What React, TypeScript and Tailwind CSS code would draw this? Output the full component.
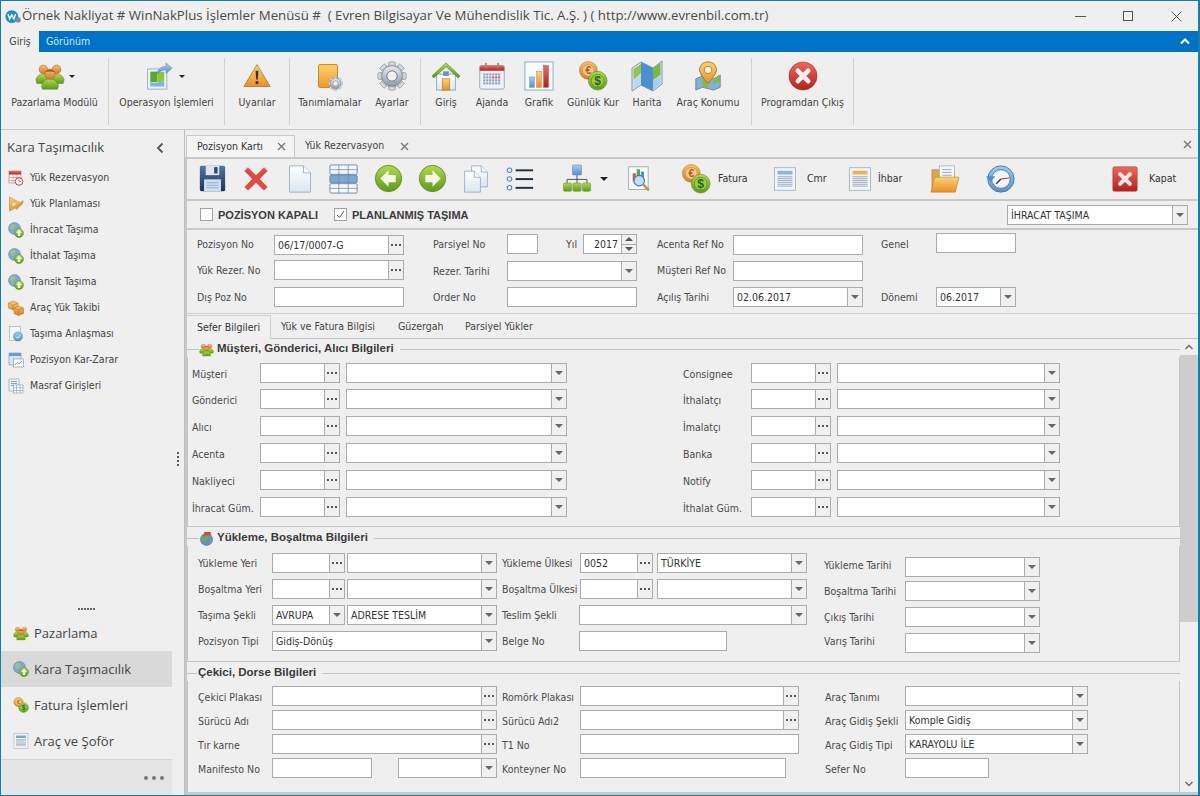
import type { ReactNode } from "react";
import { clsx } from "clsx";

function Svg({ className, children }: { className: string; children: ReactNode }) {
  return (
    <svg viewBox="0 0 32 32" className={clsx("block shrink-0", className)}>
      {children}
    </svg>
  );
}

function Defs() {
  const g = (id: string, a: string, b: string) => (
    <linearGradient id={id} x1="0" y1="0" x2="0" y2="1">
      <stop offset="0" stopColor={a} />
      <stop offset="1" stopColor={b} />
    </linearGradient>
  );
  return (
    <svg className="block h-0 w-0">
      <defs>
        {g("green", "#b4d84e", "#5c9a1c")}
        {g("orange", "#fcd273", "#e8902a")}
        {g("red", "#ea6a60", "#b3211d")}
        {g("blue", "#a9cdec", "#5a90c6")}
        {g("page", "#ffffff", "#dbe6f2")}
        {g("steel", "#e6ebf0", "#8f9aa6")}
        {g("navy", "#55749f", "#1e3557")}
        {g("euro", "#f8c070", "#d9792a")}
      </defs>
    </svg>
  );
}

const People = ({ className }: { className: string }) => (
  <Svg className={className}>
    <path d="M1 20c1-5 5-6 8-6s7 1 8 6l-1 4H2zM15 20c1-5 5-6 8-6s7 1 8 6l-1 4H16z" fill="url(#green)" stroke="#5d8a22" strokeWidth=".6" />
    <circle cx="9" cy="9" r="4.6" fill="url(#euro)" stroke="#a3622a" strokeWidth=".6" />
    <circle cx="23" cy="9" r="4.6" fill="url(#euro)" stroke="#a3622a" strokeWidth=".6" />
    <path d="M7 27c1-6 5-8 9-8s8 2 9 8l-1 3H8z" fill="url(#green)" stroke="#5d8a22" strokeWidth=".6" />
    <circle cx="16" cy="14" r="5.4" fill="url(#euro)" stroke="#a3622a" strokeWidth=".6" />
    <path d="M11 12c2-4 8-4 10 0-3-1-7-1-10 0z" fill="#9c5a2a" />
  </Svg>
);

const MapDoc = ({ className }: { className: string }) => (
  <Svg className={className}>
    <rect x="3" y="8" width="22" height="23" fill="#eef3f9" stroke="#8ea6c2" />
    <path d="M6 11h8v12H6z" fill="#5da632" />
    <path d="M14 11h8v10l-8 3z" fill="#8cc63f" />
    <path d="M6 23l8 1 8-3v7H6z" fill="#7fb5dd" />
    <path d="M14 14c0-6 5-9 10-9V1l7 6-7 6V9c-4 0-7 1-10 5z" fill="url(#blue)" stroke="#5a88b5" strokeWidth=".6" />
  </Svg>
);

const Warning = ({ className }: { className: string }) => (
  <Svg className={className}>
    <path d="M16 3L31 28H1z" fill="url(#orange)" stroke="#b97a2c" strokeLinejoin="round" />
    <path d="M14.4 10h3.2l-.7 10h-1.8z" fill="#333" />
    <circle cx="16" cy="23.5" r="1.8" fill="#333" />
  </Svg>
);

function Gear({ className, id = "steel" }: { className: string; id?: string }) {
  return (
    <Svg className={className}>
      {[0, 45, 90, 135, 180, 225, 270, 315].map((a) => (
        <rect key={a} x="12.5" y="1" width="7" height="8" rx="1.2" fill={`url(#${id})`} stroke="#6f7a86" strokeWidth=".7" transform={`rotate(${a} 16 16)`} />
      ))}
      <circle cx="16" cy="16" r="11" fill={`url(#${id})`} stroke="#6f7a86" strokeWidth=".7" />
      <circle cx="16" cy="16" r="5.5" fill="#f0f0f0" stroke="#6f7a86" strokeWidth="1" />
    </Svg>
  );
}

const FolderGear = ({ className }: { className: string }) => (
  <div className={clsx("flex shrink-0 items-end justify-end rounded-[2px] border border-[#c98a2a] bg-gradient-to-b from-[#fcd06c] to-[#ec9a30]", className)}>
    <Gear className="-mr-[6px] -mb-[4px] h-[15px] w-[15px]" />
  </div>
);

const House = ({ className }: { className: string }) => (
  <Svg className={className}>
    <rect x="6" y="14" width="20" height="17" fill="url(#page)" stroke="#8ea6c2" />
    <path d="M1 16L16 2l15 14-2 2L16 6 3 18z" fill="url(#green)" stroke="#5a8a2a" strokeWidth=".7" />
    <rect x="13" y="11" width="6" height="5" fill="#6c93bd" />
    <rect x="12" y="19" width="8" height="12" fill="url(#orange)" stroke="#b97a2c" strokeWidth=".7" />
  </Svg>
);

function Calendar({ className }: { className: string }) {
  const cells = [];
  for (let y = 0; y < 4; y++) for (let x = 0; x < 6; x++) cells.push(<rect key={x + "-" + y} x={6 + x * 3.4} y={13 + y * 3.4} width="2.4" height="2.4" fill={y === 1 && x > 2 ? "#c86060" : "#8c9cc0"} />);
  return (
    <Svg className={className}>
      <rect x="2" y="4" width="28" height="27" rx="2" fill="#f1f2f6" stroke="#93a0b0" />
      <path d="M2 6a2 2 0 012-2h24a2 2 0 012 2v4H2z" fill="url(#red)" />
      <rect x="8" y="1" width="2" height="6" fill="#8a8a8a" />
      <rect x="22" y="1" width="2" height="6" fill="#8a8a8a" />
      {cells}
    </Svg>
  );
}

const Chart = ({ className }: { className: string }) => (
  <Svg className={className}>
    <rect x="1" y="1" width="30" height="30" fill="#f8fafc" stroke="#8ea6c2" />
    <rect x="6" y="17" width="5" height="11" fill="url(#blue)" stroke="#5a88b5" strokeWidth=".5" />
    <rect x="13.5" y="11" width="5" height="17" fill="url(#orange)" stroke="#b97a2c" strokeWidth=".5" />
    <rect x="21" y="5" width="5" height="23" fill="url(#red)" stroke="#a33" strokeWidth=".5" />
  </Svg>
);

const Coins = ({ className }: { className: string }) => (
  <Svg className={className}>
    <circle cx="11" cy="10" r="9.5" fill="url(#euro)" stroke="#b5762a" strokeWidth=".6" />
    <circle cx="11" cy="10" r="6.3" fill="#f6c987" stroke="#c8863c" strokeWidth=".6" />
    <text x="11" y="14" textAnchor="middle" fontSize="11" fontWeight="700" fill="#b8561c" fontFamily="Liberation Sans">€</text>
    <circle cx="21" cy="21" r="10" fill="url(#green)" stroke="#4f8a1a" strokeWidth=".6" />
    <circle cx="21" cy="21" r="6.8" fill="#9ccc44" stroke="#4f8a1a" strokeWidth=".7" />
    <text x="21" y="25.5" textAnchor="middle" fontSize="13" fontWeight="700" fill="#2a661a" fontFamily="Liberation Sans">$</text>
  </Svg>
);

const MapFold = ({ className }: { className: string }) => (
  <Svg className={className}>
    <path d="M1 8l9-6 12 6 9-7v23l-9 7-12-6-9 6z" fill="#dfe8f0" stroke="#8293a5" />
    <path d="M10 2l12 6v23l-12-6z" fill="#4f8fd0" />
    <path d="M2.5 9L10 4v9l-7.500 7z" fill="#8cc54a" />
    <path d="M22 8l7.500-5v12L22 20z" fill="#7ab948" />
    <path d="M2.500 20L10 14v10l-7.500 5z" fill="#b9d8ee" />
    <path d="M22 20l7.500-4v8L22 30z" fill="#a9cfe8" />
  </Svg>
);

const PinMap = ({ className }: { className: string }) => (
  <Svg className={className}>
    <path d="M3 19l7-3 12 3 7-4v13l-7 3-12-3-7 3z" fill="#7fb2d8" stroke="#75838f" />
    <path d="M10 16l6 2v11l-6-2zM22 19l7-4v6l-7 4z" fill="#82b94a" />
    <path d="M16 1c-5.500 0-9 3.800-9 8.500C7 14.500 16 24 16 24s9-9.500 9-14.500C25 4.800 21.500 1 16 1z" fill="url(#orange)" stroke="#a8742a" />
    <circle cx="16" cy="9.500" r="4" fill="#fdf3d8" stroke="#b98030" />
  </Svg>
);

const RedCircle = ({ className }: { className: string }) => (
  <Svg className={className}>
    <circle cx="16" cy="16" r="15" fill="url(#red)" stroke="#a52a25" strokeWidth=".6" />
    <path d="M10.500 10.500L21.500 21.500M21.500 10.500L10.500 21.500" stroke="#fff" strokeWidth="5" strokeLinecap="round" opacity=".92" />
  </Svg>
);

const Save = ({ className }: { className: string }) => (
  <Svg className={className}>
    <rect x="1" y="1" width="30" height="30" rx="2" fill="url(#navy)" />
    <rect x="8" y="1" width="16" height="11" fill="#dfe5ee" />
    <rect x="18" y="2.500" width="4" height="7.500" fill="#2d476e" />
    <rect x="6" y="17" width="20" height="14" fill="#cfe0f1" />
    <path d="M9 21h14M9 24h14M9 27h14" stroke="#86a6c8" />
  </Svg>
);

const CrossIcon = ({ className }: { className: string }) => (
  <Svg className={className}>
    <path d="M4 4L28 28M28 4L4 28" stroke="#dc4c42" strokeWidth="6.500" />
    <path d="M3 3l3-1M26 2l3 1" stroke="#efa9a0" strokeWidth="1" />
  </Svg>
);

const Page = ({ className }: { className: string }) => (
  <Svg className={className}>
    <path d="M4 1h16l8 8v22H4z" fill="url(#page)" stroke="#92abc6" />
    <path d="M20 1v8h8" fill="#fff" stroke="#92abc6" />
  </Svg>
);

const Pages = ({ className }: { className: string }) => (
  <Svg className={className}>
    <path d="M11 1h11l7 7v17H11z" fill="url(#page)" stroke="#92abc6" />
    <path d="M22 1v7h7" fill="#fff" stroke="#92abc6" />
    <path d="M3 7h11l7 7v17H3z" fill="url(#page)" stroke="#92abc6" />
    <path d="M14 7v7h7" fill="#fff" stroke="#92abc6" />
  </Svg>
);

const GridIcon = ({ className }: { className: string }) => (
  <Svg className={className}>
    <rect x="1" y="1" width="29" height="10" rx="1" fill="#f5f8fb" stroke="#6c88a8" />
    <rect x="1" y="12" width="29" height="8" rx="1" fill="#7ea6d2" stroke="#6c88a8" />
    <rect x="1" y="21" width="29" height="10" rx="1" fill="#f5f8fb" stroke="#6c88a8" />
    <path d="M1 6h29M1 26h29M10.500 1v30M20.500 1v30" stroke="#6c88a8" strokeWidth=".8" />
  </Svg>
);

const Arrow = ({ className, right }: { className: string; right?: boolean }) => (
  <Svg className={className}>
    <circle cx="16" cy="16" r="14.500" fill="url(#green)" stroke="#5b8f25" />
    <path d={right ? "M8 12h8V7l9 9-9 9v-5H8z" : "M24 12h-8V7l-9 9 9 9v-5h8z"} fill="#f2f7e6" />
  </Svg>
);

const ListIcon = ({ className }: { className: string }) => (
  <Svg className={className}>
    {[6, 16, 26].map((y) => (
      <g key={y}>
        <circle cx="4" cy={y} r="2.600" fill="#eaf2fa" stroke="#4f86c0" strokeWidth="1.200" />
        <rect x="11" y={y - 1} width="20" height="2.200" fill="#1f2d3d" />
      </g>
    ))}
  </Svg>
);

const Org = ({ className }: { className: string }) => (
  <Svg className={className}>
    <rect x="11" y="1" width="10" height="11" rx="1" fill="url(#blue)" stroke="#5a88b5" strokeWidth=".6" />
    <path d="M16 12v5M5 21v-4h22v4M16 17v4" stroke="#445" fill="none" />
    <rect x="1" y="21" width="9" height="9" rx="1.500" fill="url(#green)" stroke="#5b8f25" strokeWidth=".6" />
    <rect x="11.500" y="21" width="9" height="9" rx="1.500" fill="url(#green)" stroke="#5b8f25" strokeWidth=".6" />
    <rect x="22" y="21" width="9" height="9" rx="1.500" fill="url(#green)" stroke="#5b8f25" strokeWidth=".6" />
  </Svg>
);

const Report = ({ className }: { className: string }) => (
  <Svg className={className}>
    <rect x="2" y="1" width="24" height="28" fill="#f8fafc" stroke="#8ea0b8" />
    <rect x="7" y="9" width="4" height="10" fill="#d35a50" />
    <rect x="12" y="4" width="4" height="10" fill="#5aa544" />
    <rect x="17" y="7" width="4" height="9" fill="#5d8ec6" />
    <circle cx="15" cy="18" r="6.500" fill="#bddcee" fillOpacity=".9" stroke="#4f7aa5" strokeWidth="1.500" />
    <path d="M20 23l7 7" stroke="#cf8a3a" strokeWidth="3" />
  </Svg>
);

const LinesDoc = ({ className, head }: { className: string; head: string }) => (
  <Svg className={className}>
    <rect x="2" y="1" width="28" height="30" fill="#f2f6fb" stroke="#8ea6c2" />
    <rect x="6" y="5" width="20" height="5" fill={head} />
    <path d="M6 13h20M6 15.500h20M6 18h20M6 20.500h20M6 23h20M6 25.500h20" stroke="#7e93ab" />
  </Svg>
);

const Folder = ({ className }: { className: string }) => (
  <Svg className={className}>
    <path d="M2 6h10l2 3h12v20H2z" fill="#e1a448" stroke="#b47d2c" strokeWidth=".6" />
    <rect x="10" y="2" width="16" height="18" fill="#f5f7fa" stroke="#98a5b5" strokeWidth=".7" />
    <path d="M13 6h10M13 9h10M13 12h10" stroke="#98a5b5" />
    <path d="M5 14h26l-4 16H1z" fill="url(#orange)" stroke="#b47d2c" strokeWidth=".6" />
  </Svg>
);

const ClockBack = ({ className }: { className: string }) => (
  <Svg className={className}>
    <circle cx="17" cy="16" r="14" fill="url(#blue)" stroke="#3f7ab0" />
    <circle cx="17" cy="16" r="10" fill="#f2f6fb" stroke="#3f7ab0" />
    <path d="M1 13h10l-5 6z" fill="#4f8ec8" />
    <path d="M17 16l9-1" stroke="#b33" strokeWidth="1.200" />
    <path d="M17 16l-5 5" stroke="#334" strokeWidth="1.500" />
  </Svg>
);

const KapatIcon = ({ className }: { className: string }) => (
  <Svg className={className}>
    <rect x="1" y="1" width="30" height="30" rx="2" fill="url(#red)" stroke="#9f2a25" strokeWidth=".6" />
    <path d="M10 10L22 22M22 10L10 22" stroke="#fbe6e2" strokeWidth="5" strokeLinecap="round" />
  </Svg>
);

const GlobeUp = ({ className }: { className: string }) => (
  <Svg className={className}>
    <circle cx="13" cy="13" r="12" fill="#7ea8d4" stroke="#5c7fa5" />
    <path d="M5 6c4-3 9-2 10 1s-3 4-4 7-4 2-6-1-1-5 0-7zM17 15c3-1 6 0 6 2s-3 4-5 3-3-4-1-5z" fill="#9fc08a" />
    <circle cx="22" cy="22" r="9" fill="url(#green)" stroke="#4f8a1a" />
    <path d="M22 15l6 7h-3.500v6h-5v-6H16z" fill="#f2f9e6" />
  </Svg>
);

const CalClock = ({ className }: { className: string }) => (
  <Svg className={className}>
    <rect x="2" y="2" width="24" height="24" fill="#f7f7f7" stroke="#a06060" />
    <rect x="2" y="2" width="24" height="7" fill="url(#red)" />
    <path d="M2 15h24M2 21h24M10 9v17M18 9v17" stroke="#b07070" />
    <circle cx="22" cy="23" r="7.500" fill="#fff" stroke="#c0392b" strokeWidth="2" />
    <path d="M22 19v4h3" stroke="#c0392b" strokeWidth="1.500" fill="none" />
  </Svg>
);

const PlanIcon = ({ className }: { className: string }) => (
  <Svg className={className}>
    <path d="M3 2l26 14L3 30z" fill="url(#orange)" stroke="#b47d2c" />
    <path d="M8 11l10 5-10 6z" fill="#fdeec8" stroke="#b47d2c" strokeWidth=".7" />
    <path d="M15 25L29 9l2 3-13 15z" fill="#e8a040" stroke="#a0682a" strokeWidth=".7" />
  </Svg>
);

const Boxes = ({ className }: { className: string }) => (
  <Svg className={className}>
    <path d="M10 2l10 4v10l-10 4L1 16V6z" fill="url(#orange)" stroke="#a8742a" />
    <path d="M21 12l10 4v11l-10 4-9-4V16z" fill="url(#euro)" stroke="#a8742a" />
    <path d="M1 6l9 4 10-4M10 10v10M12 16l9 4 10-4M21 20v11" stroke="#a8742a" fill="none" />
  </Svg>
);

const Agreement = ({ className }: { className: string }) => (
  <Svg className={className}>
    <rect x="3" y="1" width="22" height="28" fill="#f5f8fb" stroke="#7e9bb8" />
    <circle cx="20" cy="21" r="9" fill="url(#blue)" stroke="#4f7aa5" />
    <path d="M15.500 21l3.500 3.500 5.500-6" stroke="#fff" strokeWidth="2" fill="none" />
  </Svg>
);

const WinChart = ({ className }: { className: string }) => (
  <Svg className={className}>
    <rect x="2" y="2" width="24" height="24" fill="#d7e5f3" stroke="#5d83ab" />
    <rect x="2" y="2" width="24" height="6" fill="#6d9ac8" />
    <rect x="11" y="14" width="20" height="16" fill="#fff" stroke="#5d83ab" />
    <path d="M14 26l4-5 4 3 6-6" stroke="#3d8a3d" strokeWidth="1.500" fill="none" />
  </Svg>
);

const TableCalc = ({ className }: { className: string }) => (
  <Svg className={className}>
    <rect x="2" y="2" width="20" height="24" fill="#eef3f9" stroke="#6b88a6" />
    <path d="M6 7h12M6 11h12M6 15h5" stroke="#6b88a6" strokeWidth="1.500" />
    <rect x="11" y="14" width="19" height="16" fill="#fff" stroke="#6b88a6" />
    <path d="M11 19.500h19M11 25h19M17 14v16M24 14v16" stroke="#6b88a6" />
  </Svg>
);

const FlagGlobe = ({ className }: { className: string }) => (
  <Svg className={className}>
    <circle cx="16" cy="18" r="13" fill="#5f8fc4" stroke="#4a6a8a" />
    <path d="M6 12c5-4 12-4 14 0s-4 5-6 9-6 3-8-1-2-6 0-8zM22 20c3-1 5 0 5 2s-3 4-5 3-2-4 0-5z" fill="#74a85a" />
    <path d="M12 2v12" stroke="#666" strokeWidth="1.500" />
    <path d="M12 2h13v7H12z" fill="#d8453a" />
  </Svg>
);

function Caret({ className = "border-t-[#666]" }: { className?: string }) {
  return <span className={clsx("block h-0 w-0 border-x-[4px] border-t-[4px] border-x-transparent", className)} />;
}

function SmallCaret({ className }: { className: string }) {
  return <span className={clsx("block h-0 w-0 border-x-[3px] border-t-[3px] border-x-transparent border-t-[#222]", className)} />;
}

function Dots() {
  return (
    <span className="flex gap-[2px]">
      <i className="block h-[2px] w-[2px] bg-[#555]" />
      <i className="block h-[2px] w-[2px] bg-[#555]" />
      <i className="block h-[2px] w-[2px] bg-[#555]" />
    </span>
  );
}

function Field({ className, value, kind }: { className: string; value?: string; kind?: "dots" | "drop" }) {
  return (
    <div className={clsx("flex h-5 shrink-0 border border-[#ababab] bg-white", className)}>
      <span className="min-w-0 flex-1 px-[3px] leading-[18px] whitespace-nowrap text-[#333]">{value}</span>
      {kind && (
        <span className="flex w-[15px] shrink-0 items-center justify-center border-l border-[#ababab] bg-[#f0f0f0]">
          {kind === "dots" ? <Dots /> : <Caret />}
        </span>
      )}
    </div>
  );
}

function Label({ className, children }: { className: string; children: ReactNode }) {
  return <span className={clsx("shrink-0 leading-5 whitespace-nowrap text-[#4a4a4a]", className)}>{children}</span>;
}

// a few rows sit their captions one pixel under the field's middle
function LowLabel({ className, children }: { className: string; children: ReactNode }) {
  return <Label className={clsx("translate-y-px", className)}>{children}</Label>;
}

function RibbonItem({ className, icon, label, arrow }: { className: string; icon: ReactNode; label: string; arrow?: string }) {
  return (
    <div className={clsx("flex shrink-0 flex-col items-center", className)}>
      <div className="flex h-9 items-center">
        {icon}
        {arrow && <SmallCaret className={arrow} />}
      </div>
      <span className="leading-4 whitespace-nowrap text-[#444]">{label}</span>
    </div>
  );
}

function RibbonGroup({ className, children }: { className: string; children: ReactNode }) {
  return <div className={clsx("flex h-[67px] shrink-0 items-start border-r border-[#d0d0d0]", className)}>{children}</div>;
}

function Ribbon() {
  return (
    <div className="flex h-[78px] shrink-0 border-b border-[#c6c6c6] pt-[6px]">
      <RibbonGroup className="w-[108px]">
        <RibbonItem className="w-[107px]" label="Pazarlama Modülü" arrow="ml-[3px] -mr-[9px]" icon={<People className="ml-[-10px] h-[30px] w-[32px]" />} />
      </RibbonGroup>
      <RibbonGroup className="w-[116px]">
        <RibbonItem className="w-[115px]" label="Operasyon İşlemleri" arrow="ml-[6px] -mr-[12px]" icon={<MapDoc className="ml-[-16px] h-[30px] w-[28px]" />} />
      </RibbonGroup>
      <RibbonGroup className="w-[65px]">
        <RibbonItem className="w-[64px]" label="Uyarılar" icon={<Warning className="h-[28px] w-[30px]" />} />
      </RibbonGroup>
      <RibbonGroup className="w-[131px]">
        <RibbonItem className="w-[80px]" label="Tanımlamalar" icon={<FolderGear className="h-[24px] w-[20px] -translate-x-[2px]" />} />
        <RibbonItem className="w-[44px]" label="Ayarlar" icon={<Gear className="h-[30px] w-[30px]" />} />
      </RibbonGroup>
      <RibbonGroup className="w-[331px]">
        <RibbonItem className="w-[50px]" label="Giriş" icon={<House className="h-[30px] w-[30px]" />} />
        <RibbonItem className="w-[42px]" label="Ajanda" icon={<Calendar className="h-[30px] w-[28px]" />} />
        <RibbonItem className="w-[52px]" label="Grafik" icon={<Chart className="h-[30px] w-[30px]" />} />
        <RibbonItem className="w-[56px]" label="Günlük Kur" icon={<Coins className="h-[30px] w-[30px]" />} />
        <RibbonItem className="w-[52px]" label="Harita" icon={<MapFold className="h-[32px] w-[32px]" />} />
        <RibbonItem className="w-[70px]" label="Araç Konumu" icon={<PinMap className="h-[32px] w-[30px]" />} />
      </RibbonGroup>
      <RibbonGroup className="w-[102px]">
        <RibbonItem className="w-[101px]" label="Programdan Çıkış" icon={<RedCircle className="h-[30px] w-[30px]" />} />
      </RibbonGroup>
    </div>
  );
}

const moduleItems = [
  { label: "Yük Rezervasyon", icon: <CalClock className="h-4 w-4" /> },
  { label: "Yük Planlaması", icon: <PlanIcon className="h-4 w-4" /> },
  { label: "İhracat Taşıma", icon: <GlobeUp className="h-4 w-4" /> },
  { label: "İthalat Taşıma", icon: <GlobeUp className="h-4 w-4" /> },
  { label: "Transit Taşıma", icon: <GlobeUp className="h-4 w-4" /> },
  { label: "Araç Yük Takibi", icon: <Boxes className="h-4 w-4" /> },
  { label: "Taşıma Anlaşması", icon: <Agreement className="h-4 w-4" /> },
  { label: "Pozisyon Kar-Zarar", icon: <WinChart className="h-4 w-4" /> },
  { label: "Masraf Girişleri", icon: <TableCalc className="h-4 w-4" /> },
];

const navItems = [
  { label: "Pazarlama", icon: <People className="h-4 w-4" /> },
  { label: "Kara Taşımacılık", icon: <GlobeUp className="h-4 w-4" />, active: true },
  { label: "Fatura İşlemleri", icon: <Coins className="h-4 w-4" /> },
  { label: "Araç ve Şoför", icon: <LinesDoc className="h-4 w-4" head="#7fa6d3" /> },
];

const headingFont = "text-[13px] [font-family:'Open_Sans',sans-serif]";

function Sidebar() {
  return (
    <aside className="flex w-[184px] shrink-0 border-r border-[#bdbdbd]">
      <div className="flex w-[171px] shrink-0 flex-col">
        <div className="flex h-[35px] shrink-0 items-center justify-between pr-[7px] pl-[6px]">
          <span className={clsx(headingFont, "text-[#444]")}>Kara Taşımacılık</span>
          <svg viewBox="0 0 10 12" className="h-3 w-[10px]">
            <path d="M7.500 1.500L3 6l4.500 4.500" stroke="#555" strokeWidth="1.800" fill="none" />
          </svg>
        </div>
        <div className="flex flex-col">
          {moduleItems.map((m) => (
            <div key={m.label} className="flex h-[26px] items-center gap-[6px] pl-[7px]">
              {m.icon}
              <span className="text-[#444]">{m.label}</span>
            </div>
          ))}
        </div>
        <div className="mt-auto flex h-[12px] items-center justify-center gap-[1px]">
          {[0, 1, 2, 3, 4, 5].map((d) => (
            <i key={d} className="block h-[2px] w-[2px] bg-[#666]" />
          ))}
        </div>
        <div className="flex flex-col">
          {navItems.map((n) => (
            <div key={n.label} className={clsx("flex h-9 items-center gap-[5px] pl-[12px] text-[#444]", headingFont, n.active && "bg-[#d9d9d9]")}>
              {n.icon}
              <span className="translate-y-px">{n.label}</span>
            </div>
          ))}
        </div>
        <div className="flex h-[36px] items-center justify-end gap-[4px] border-t border-[#d4d4d4] bg-[#e5e5e5] pr-[8px]">
          <i className="block h-[4px] w-[4px] rounded-full bg-[#777]" />
          <i className="block h-[4px] w-[4px] rounded-full bg-[#777]" />
          <i className="block h-[4px] w-[4px] rounded-full bg-[#777]" />
        </div>
      </div>
      <div className="flex flex-1 flex-col items-center justify-center gap-[2px] pb-[8px]">
        <i className="block h-[2px] w-[2px] bg-[#555]" />
        <i className="block h-[2px] w-[2px] bg-[#555]" />
        <i className="block h-[2px] w-[2px] bg-[#555]" />
        <i className="block h-[2px] w-[2px] bg-[#555]" />
      </div>
    </aside>
  );
}

function Toolbar() {
  return (
    <div className="flex h-[44px] shrink-0 items-center border-y-2 border-l-2 border-[#c8c8c8] pb-[1px] pl-[3px]">
      <span className="flex w-[44px] justify-center"><Save className="h-[27px] w-[27px]" /></span>
      <span className="flex w-[44px] justify-center"><CrossIcon className="h-[26px] w-[26px]" /></span>
      <span className="flex w-[44px] justify-center"><Page className="h-[30px] w-[28px]" /></span>
      <span className="flex w-[44px] justify-center"><GridIcon className="h-[30px] w-[30px]" /></span>
      <span className="flex w-[44px] justify-center"><Arrow className="h-[29px] w-[29px]" /></span>
      <span className="flex w-[44px] justify-center"><Arrow right className="h-[29px] w-[29px]" /></span>
      <span className="flex w-[44px] justify-center"><Pages className="h-[30px] w-[28px]" /></span>
      <span className="flex w-[44px] justify-center"><ListIcon className="h-[28px] w-[28px]" /></span>
      <Org className="ml-[20px] h-[29px] w-[30px]" />
      <Caret className="ml-[8px] mr-[0px] border-t-[#222]" />
      <Report className="ml-[19px] h-[30px] w-[26px]" />
      <Coins className="ml-[28px] h-[30px] w-[30px]" />
      <span className="ml-[7px] w-[32px] text-[#333]">Fatura</span>
      <LinesDoc className="ml-[23px] h-[30px] w-[24px]" head="#8fb5dd" />
      <span className="ml-[10px] w-[20px] text-[#333]">Cmr</span>
      <LinesDoc className="ml-[21px] h-[30px] w-[24px]" head="#f0b04a" />
      <span className="ml-[6px] w-[26px] text-[#333]">İhbar</span>
      <Folder className="ml-[25px] h-[30px] w-[32px]" />
      <ClockBack className="ml-[24px] h-[30px] w-[30px]" />
      <KapatIcon className="ml-[97px] h-[26px] w-[26px]" />
      <span className="ml-[11px] text-[#333]">Kapat</span>
    </div>
  );
}

const boldText = "font-bold whitespace-nowrap text-[#3c3c3c] [font-family:'Liberation_Sans',sans-serif]";

function CheckRow() {
  return (
    <div className="flex h-[29px] shrink-0 items-center border-b-2 border-l-2 border-[#c8c8c8] pl-[13px]">
      <span className="h-[13px] w-[13px] border border-[#a0a0a0] bg-white" />
      <span className={clsx("mt-px ml-[5px] w-[116px] text-[11px]", boldText)}>POZİSYON KAPALI</span>
      <span className="flex h-[13px] w-[13px] items-center justify-center border border-[#a0a0a0] bg-white">
        <svg viewBox="0 0 11 11" className="h-[11px] w-[11px]">
          <path d="M2 6l2.500 2.500L9 2" stroke="#555" strokeWidth="1" fill="none" />
        </svg>
      </span>
      <span className={clsx("mt-px ml-[5px] text-[11px]", boldText)}>PLANLANMIŞ TAŞIMA</span>
      <Field className="mr-[10px] ml-auto w-[181px]" value="İHRACAT TAŞIMA" kind="drop" />
    </div>
  );
}

function Spin() {
  return (
    <div className="flex h-5 w-[54px] shrink-0 border border-[#ababab] bg-white">
      <span className="flex-1 pr-[3px] text-right leading-[18px] text-[#333]">2017</span>
      <span className="flex w-[15px] flex-col border-l border-[#ababab] bg-[#f0f0f0]">
        <span className="flex flex-1 items-center justify-center border-b border-[#ababab]">
          <Caret className="rotate-180 border-t-[#555]" />
        </span>
        <span className="flex flex-1 items-center justify-center">
          <Caret className="border-t-[#555]" />
        </span>
      </span>
    </div>
  );
}

function TopFields() {
  return (
    <div className="flex h-[84px] shrink-0 flex-col border-b border-l-2 border-[#c8c8c8] border-b-[#d0d0d0] pt-[4px] pl-[10px]">
      <div className="flex h-[27px] items-start">
        <Label className="w-[77px]">Pozisyon No</Label>
        <Field className="mt-[1px] w-[130px]" value="06/17/0007-G" kind="dots" />
        <Label className="ml-[29px] w-[74px]">Parsiyel No</Label>
        <Field className="w-[31px]" />
        <Label className="ml-[28px] w-[17px]">Yıl</Label>
        <Spin />
        <Label className="ml-[20px] w-[76px]">Acenta Ref No</Label>
        <Field className="mt-[1px] w-[130px]" />
        <Label className="ml-[18px] w-[55px]">Genel</Label>
        <Field className="-mt-[1px] w-[80px]" />
      </div>
      <div className="flex h-[27px] items-start">
        <Label className="w-[77px]">Yük Rezer. No</Label>
        <Field className="w-[130px]" kind="dots" />
        <Label className="ml-[29px] mt-[1px] w-[74px]">Rezer. Tarihi</Label>
        <Field className="mt-[1px] w-[130px]" kind="drop" />
        <Label className="ml-[20px] w-[76px]">Müşteri Ref No</Label>
        <Field className="mt-[1px] w-[130px]" />
      </div>
      <div className="flex h-[27px] items-start">
        <Label className="w-[77px]">Dış Poz No</Label>
        <Field className="w-[130px]" />
        <Label className="ml-[29px] w-[74px]">Order No</Label>
        <Field className="w-[130px]" />
        <Label className="ml-[20px] w-[76px]">Açılış Tarihi</Label>
        <Field className="w-[130px]" value="02.06.2017" kind="drop" />
        <Label className="ml-[18px] w-[55px]">Dönemi</Label>
        <Field className="w-[80px]" value="06.2017" kind="drop" />
      </div>
    </div>
  );
}

function InnerTabs() {
  return (
    <div className="flex h-[25px] shrink-0 items-end border-b border-l-2 border-[#c8c8c8] border-b-[#c4c4c4]">
      <span className="-mb-px flex h-[24px] w-[84px] items-center justify-center border-t border-r border-[#d0d0d0] bg-[#f0f0f0] text-[#333]">Sefer Bilgileri</span>
      <span className="ml-[10px] flex h-[23px] w-[117px] items-center text-[#444]">Yük ve Fatura Bilgisi</span>
      <span className="flex h-[23px] w-[67px] items-center text-[#444]">Güzergah</span>
      <span className="flex h-[23px] items-center text-[#444]">Parsiyel Yükler</span>
    </div>
  );
}

function Group({ title, icon, className, bodyClass, children }: { title: string; icon?: ReactNode; className?: string; bodyClass: string; children: ReactNode }) {
  return (
    <section className={clsx("flex shrink-0 flex-col", className)}>
      <div className="flex h-[15px] items-center">
        <i className={clsx("block h-px bg-[#c4c4c4]", icon ? "w-[12px]" : "w-[10px]")} />
        {icon}
        <span className={clsx("mb-[2px] px-[1px] text-[11.500px] leading-none font-bold whitespace-nowrap text-[#3a3a3a] [font-family:'Liberation_Sans',sans-serif]", icon && "ml-[2px]")}>{title}</span>
        <i className="ml-[5px] block h-px flex-1 bg-[#c4c4c4]" />
      </div>
      <div className={clsx("flex border-x border-[#c4c4c4]", bodyClass)}>{children}</div>
    </section>
  );
}

const customers = [
  ["Müşteri", "Consignee", "h-[26px]"],
  ["Gönderici", "İthalatçı", "h-[27px]"],
  ["Alıcı", "İmalatçı", "h-[27px]"],
  ["Acenta", "Banka", "h-[27px]"],
  ["Nakliyeci", "Notify", "h-[27px]"],
  ["İhracat Güm.", "İthalat Güm.", "h-[20px]"],
];

function CustomerGroup() {
  return (
    <Group title="Müşteri, Gönderici, Alıcı Bilgileri" bodyClass="flex-col border-b pt-[6px] pb-[9px] pl-[4px]" className="mt-[3px]" icon={<People className="h-[15px] w-[15px]" />}>
      {customers.map(([left, right, h]) => (
        <div key={left} className={clsx("flex items-start", h)}>
          <LowLabel className="w-[68px]">{left}</LowLabel>
          <Field className="w-[80px]" kind="dots" />
          <Field className="ml-[6px] w-[221px]" kind="drop" />
          <LowLabel className="ml-[116px] w-[68px]">{right}</LowLabel>
          <Field className="w-[80px]" kind="dots" />
          <Field className="ml-[6px] w-[223px]" kind="drop" />
        </div>
      ))}
    </Group>
  );
}

const dateRows = [
  { label: "Yükleme Tarihi", row: "", text: "-translate-y-[2px]" },
  { label: "Boşaltma Tarihi", row: "-mt-[2px]", text: "" },
  { label: "Çıkış Tarihi", row: "", text: "" },
  { label: "Varış Tarihi", row: "", text: "-translate-y-[2px]" },
];

function LoadGroup() {
  return (
    <Group title="Yükleme, Boşaltma Bilgileri" bodyClass="border-b pt-[7px] pb-[8px] pl-[10px]" className="mt-[4px]" icon={<FlagGlobe className="h-[15px] w-[15px]" />}>
      <div className="flex w-[626px] shrink-0 flex-col gap-[6px]">
        <div className="flex">
          <Label className="w-[74px]">Yükleme Yeri</Label>
          <Field className="w-[73px]" kind="dots" />
          <Field className="ml-[2px] w-[150px]" kind="drop" />
          <Label className="ml-[5px] w-[78px]">Yükleme Ülkesi</Label>
          <Field className="w-[73px]" value="0052" kind="dots" />
          <Field className="ml-[4px] w-[150px]" value="TÜRKİYE" kind="drop" />
        </div>
        <div className="flex">
          <Label className="w-[74px]">Boşaltma Yeri</Label>
          <Field className="w-[73px]" kind="dots" />
          <Field className="ml-[2px] w-[150px]" kind="drop" />
          <Label className="ml-[5px] w-[78px]">Boşaltma Ülkesi</Label>
          <Field className="w-[73px]" kind="dots" />
          <Field className="ml-[4px] w-[150px]" kind="drop" />
        </div>
        <div className="flex">
          <Label className="w-[74px]">Taşıma Şekli</Label>
          <Field className="w-[73px]" value="AVRUPA" kind="drop" />
          <Field className="ml-[2px] w-[150px]" value="ADRESE TESLİM" kind="drop" />
          <Label className="ml-[5px] w-[77px]">Teslim Şekli</Label>
          <Field className="w-[228px]" kind="drop" />
        </div>
        <div className="flex">
          <Label className="w-[74px]">Pozisyon Tipi</Label>
          <Field className="w-[225px]" value="Gidiş-Dönüş" kind="drop" />
          <Label className="ml-[5px] w-[77px]">Belge No</Label>
          <Field className="w-[148px]" />
        </div>
      </div>
      <div className="mt-[4px] flex flex-col gap-[6px]">
        {dateRows.map((d) => (
          <div key={d.label} className={clsx("flex", d.row)}>
            <Label className={clsx("w-[81px]", d.text)}>{d.label}</Label>
            <Field className="w-[135px]" kind="drop" />
          </div>
        ))}
      </div>
    </Group>
  );
}

function VehicleGroup() {
  return (
    <Group title="Çekici, Dorse Bilgileri" bodyClass="flex-1 flex-col gap-[4px] pt-[5px] pl-[10px]" className="mt-[4px] flex-1">
      <div className="flex">
        <LowLabel className="w-[74px]">Çekici Plakası</LowLabel>
        <Field className="w-[225px]" kind="dots" />
        <LowLabel className="ml-[5px] w-[78px]">Romörk Plakası</LowLabel>
        <Field className="w-[219px]" kind="dots" />
        <LowLabel className="ml-[26px] w-[80px]">Araç Tanımı</LowLabel>
        <Field className="w-[183px]" kind="drop" />
      </div>
      <div className="flex">
        <LowLabel className="w-[74px]">Sürücü Adı</LowLabel>
        <Field className="w-[225px]" kind="dots" />
        <LowLabel className="ml-[5px] w-[78px]">Sürücü Adı2</LowLabel>
        <Field className="w-[219px]" kind="dots" />
        <LowLabel className="ml-[26px] w-[80px]">Araç Gidiş Şekli</LowLabel>
        <Field className="w-[183px]" value="Komple Gidiş" kind="drop" />
      </div>
      <div className="flex">
        <LowLabel className="w-[74px]">Tır karne</LowLabel>
        <Field className="w-[225px]" kind="dots" />
        <LowLabel className="ml-[5px] w-[78px]">T1 No</LowLabel>
        <Field className="w-[219px]" />
        <LowLabel className="ml-[26px] w-[80px]">Araç Gidiş Tipi</LowLabel>
        <Field className="w-[183px]" value="KARAYOLU İLE" kind="drop" />
      </div>
      <div className="flex">
        <LowLabel className="w-[74px]">Manifesto No</LowLabel>
        <Field className="w-[100px]" />
        <Field className="ml-[26px] w-[99px]" kind="drop" />
        <LowLabel className="ml-[5px] w-[78px]">Konteyner No</LowLabel>
        <Field className="w-[206px]" />
        <LowLabel className="ml-[39px] w-[80px]">Sefer No</LowLabel>
        <Field className="w-[84px]" />
      </div>
    </Group>
  );
}

function Scrollbar() {
  return (
    <div className="flex w-[18px] shrink-0 flex-col bg-[#f0f0f0]">
      <span className="flex h-[16px] items-center justify-center">
        <svg viewBox="0 0 10 6" className="h-[6px] w-[10px]">
          <path d="M1.500 5L5 1.500 8.500 5" stroke="#666" strokeWidth="1.300" fill="none" />
        </svg>
      </span>
      <span className="h-[267px] bg-[#cdcdcd]" />
      <span className="mt-auto flex h-[16px] items-center justify-center">
        <svg viewBox="0 0 10 6" className="h-[6px] w-[10px]">
          <path d="M1.500 1L5 4.500 8.500 1" stroke="#666" strokeWidth="1.300" fill="none" />
        </svg>
      </span>
    </div>
  );
}

function CloseX({ className }: { className: string }) {
  return (
    <svg viewBox="0 0 9 9" className={clsx("h-[9px] w-[9px] shrink-0", className)}>
      <path d="M1 1l7 7M8 1L1 8" stroke="#777" strokeWidth="1.400" />
    </svg>
  );
}

function Content() {
  return (
    <main className="flex min-w-0 flex-1 flex-col">
      <div className="flex h-[27px] shrink-0 items-end pl-px">
        <div className="flex h-[22px] w-[109px] items-center border-x border-t border-[#c8c8c8] bg-[#f4f4f4] pl-[10px]">
          <span className="w-[80px] text-[#333]">Pozisyon Kartı</span>
          <CloseX className="" />
        </div>
        <div className="flex h-[22px] items-center pl-[10px]">
          <span className="w-[95px] text-[#444]">Yük Rezervasyon</span>
          <CloseX className="" />
        </div>
        <CloseX className="mr-[6px] mb-[8px] ml-auto" />
      </div>
      <Toolbar />
      <CheckRow />
      <TopFields />
      <InnerTabs />
      <div className="flex min-h-0 flex-1 border-b-[3px] border-l-2 border-[#c8c8c8]">
        <div className="flex min-w-0 flex-1 flex-col">
          <CustomerGroup />
          <LoadGroup />
          <VehicleGroup />
        </div>
        <Scrollbar />
      </div>
    </main>
  );
}

export default function App() {
  return (
    <div className="flex h-[796px] w-[1200px] flex-col overflow-hidden border border-r-2 border-[#147fa8] bg-[#efefef] text-[10.500px] text-[#444] [font-family:'DejaVu_Sans_Condensed','Liberation_Sans',sans-serif]">
      <Defs />
      <div className="flex h-[30px] shrink-0 items-center pl-[4px]">
        <svg viewBox="0 0 20 16" className="h-[15px] w-[17px] shrink-0">
          <circle cx="8" cy="8" r="7.500" fill="#1d8ec2" />
          <path d="M3.500 5l2 6 2.500-5 2.500 5 2-6" stroke="#fff" strokeWidth="1.600" fill="none" />
          <circle cx="15.500" cy="12" r="3" fill="#7d8b92" />
        </svg>
        <span className="text-[13.250px] whitespace-pre text-[#4a4a4a] [font-family:'Open_Sans',sans-serif]">Örnek Nakliyat # WinNakPlus İşlemler Menüsü #  ( Evren Bilgisayar Ve Mühendislik Tic. A.Ş. ) ( http://www.evrenbil.com.tr)</span>
        <div className="-mr-[2px] ml-auto flex items-center">
          <span className="flex w-12 justify-center"><i className="block h-px w-[11px] bg-[#555]" /></span>
          <span className="flex w-12 justify-center"><i className="block h-[10px] w-[10px] border border-[#555]" /></span>
          <span className="flex w-12 justify-center">
            <svg viewBox="0 0 11 11" className="h-[11px] w-[11px]"><path d="M.5.500l10 10M10.500.500l-10 10" stroke="#555" /></svg>
          </span>
        </div>
      </div>
      <div className="flex h-[21px] shrink-0">
        <span className="flex w-[38px] items-center justify-center text-[#444]">Giriş</span>
        <div className="flex flex-1 items-center justify-between bg-[#0072c6] pr-[8px] pl-[7px]">
          <span className="text-[#d6e8f7]">Görünüm</span>
          <svg viewBox="0 0 10 7" className="h-[7px] w-[10px]"><path d="M1 5.500L5 1.500l4 4" stroke="#fff" strokeWidth="2" fill="none" /></svg>
        </div>
      </div>
      <Ribbon />
      <div className="flex min-h-0 flex-1">
        <Sidebar />
        <Content />
      </div>
    </div>
  );
}
